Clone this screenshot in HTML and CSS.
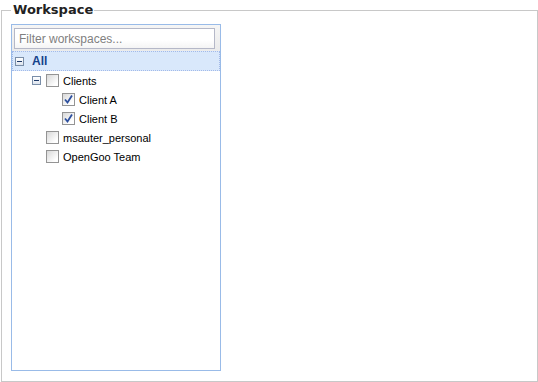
FILE: index.html
```html
<!DOCTYPE html>
<html lang="en">
<head>
    <meta charset="UTF-8">
    <title>Workspace</title>
    <link rel="stylesheet" href="styles.css">
</head>
<body>

    <fieldset class="workspace">
        <legend>Workspace</legend>

        <div class="tree-panel">
            <div class="toolbar">
                <input type="text" class="filter" placeholder="Filter workspaces...">
            </div>

            <div class="tree">
                <div class="node root selected">
                    <span class="elbow"><span class="minus"></span></span>
                    <span class="label">All</span>
                </div>

                <div class="node level-1">
                    <span class="elbow"><span class="minus"></span></span>
                    <span class="check"></span>
                    <span class="label">Clients</span>
                </div>
                <div class="node level-2">
                    <span class="elbow"></span>
                    <span class="check checked"><svg viewBox="0 0 13 13" width="13" height="13"><path d="M3 6.5 L5.5 9.5 L10 2.5" fill="none" stroke="#2c4f9e" stroke-width="1.8"/></svg></span>
                    <span class="label">Client A</span>
                </div>
                <div class="node level-2">
                    <span class="elbow"></span>
                    <span class="check checked"><svg viewBox="0 0 13 13" width="13" height="13"><path d="M3 6.5 L5.5 9.5 L10 2.5" fill="none" stroke="#2c4f9e" stroke-width="1.8"/></svg></span>
                    <span class="label">Client B</span>
                </div>
                <div class="node level-1">
                    <span class="elbow"></span>
                    <span class="check"></span>
                    <span class="label">msauter_personal</span>
                </div>
                <div class="node level-1">
                    <span class="elbow"></span>
                    <span class="check"></span>
                    <span class="label">OpenGoo Team</span>
                </div>
            </div>
        </div>
    </fieldset>

</body>
</html>
```

FILE: styles.css
```css
body {
    margin: 0;
    background-color: #fff;
    font-family: 'Liberation Sans', Arial, sans-serif;
    font-size: 11px;
    color: #000;
}

.workspace {
    box-sizing: border-box;
    margin: 0 0 0 1px;
    width: 537px;
    height: 382px;
    padding: 0 0 0 9px;
    border: 1px solid #c8c8c8;
}

.workspace legend {
    padding: 0 1px 0 2px;
    font-family: 'DejaVu Sans', sans-serif;
    font-weight: bold;
    font-size: 13px;
    line-height: 20px;
    color: #222;
}

.tree-panel {
    box-sizing: border-box;
    margin-top: 4px;
    width: 210px;
    height: 347px;
    border: 1px solid #99bbe8;
    background-color: #fff;
}

.toolbar {
    padding: 3px 2px 2px 2px;
    background: linear-gradient(#f5f5f5, #ebebeb);
}

.filter {
    box-sizing: border-box;
    display: block;
    width: 201px;
    height: 21px;
    margin: 0;
    padding: 1px 4px;
    border: 1px solid #b5b8c8;
    background: linear-gradient(#fff 60%, #f4f4f4);
    font-family: 'Liberation Sans', Arial, sans-serif;
    font-size: 12px;
}

.filter::placeholder {
    color: #808080;
}

.node {
    display: flex;
    align-items: center;
    height: 19px;
    white-space: nowrap;
}

.node.root {
    height: 18px;
}

.node.selected {
    background-color: #d9e8fb;
    border: 1px dotted #a3bae9;
}

.level-1 {
    padding-left: 16px;
}

.level-2 {
    padding-left: 32px;
}

.elbow {
    width: 16px;
    height: 16px;
    display: flex;
    align-items: center;
    padding-left: 4px;
    box-sizing: border-box;
}

.root .elbow {
    padding-left: 2px;
}

.minus {
    position: relative;
    box-sizing: border-box;
    width: 9px;
    height: 9px;
    border: 1px solid #7a8ea8;
    background: linear-gradient(#fff, #dde4ee);
}

.minus::after {
    content: '';
    position: absolute;
    left: 1px;
    top: 3px;
    width: 5px;
    height: 1px;
    background-color: #1e3968;
}

.check {
    box-sizing: border-box;
    width: 13px;
    height: 13px;
    margin-left: 2px;
    margin-right: 4px;
    border: 1px solid #949494;
    background: linear-gradient(135deg, #d8d8d8, #fff 80%);
    display: flex;
    align-items: center;
    justify-content: center;
}

.check svg {
    flex: none;
}

.label {
    line-height: 16px;
}

.root .label {
    margin-left: 3px;
    font-weight: bold;
    font-size: 12px;
    color: #15428b;
}
```
